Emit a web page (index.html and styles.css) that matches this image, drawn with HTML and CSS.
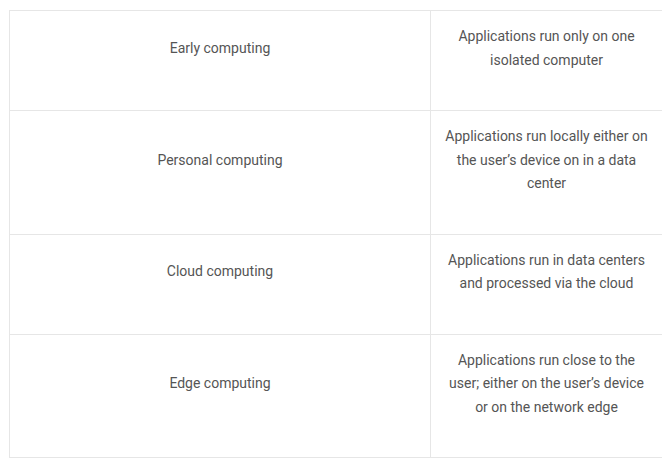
FILE: index.html
```html
<!DOCTYPE html>
<html>
<head>
<meta charset="utf-8">
<link rel="stylesheet" href="styles.css">
</head>
<body>
<table class="cmp">
  <colgroup><col class="c1"><col class="c2"></colgroup>
  <tbody>
    <tr><td><p>Early computing</p></td><td><p>Applications run only on one isolated computer</p></td></tr>
    <tr><td><p>Personal computing</p></td><td><p>Applications run locally either on the user’s device on in a data center</p></td></tr>
    <tr><td><p>Cloud computing</p></td><td><p>Applications run in data centers and processed via the cloud</p></td></tr>
    <tr><td><p>Edge computing</p></td><td><p>Applications run close to the user; either on the user’s device or on the network edge</p></td></tr>
  </tbody>
</table>
</body>
</html>
```
FILE: styles.css
```css
html, body { background: #fff; }
body {
  margin: 10px 9px 0 9px;
  font-family: Roboto, "Liberation Sans", sans-serif;
  font-size: 14px;
  color: #555;
}
.cmp {
  width: 654px;
  border-collapse: collapse;
  table-layout: fixed;
}
.c1 { width: 421px; }
.cmp td {
  border: 1px solid #e6e6e6;
  padding: 14px 12px;
  text-align: center;
  vertical-align: middle;
  line-height: 23.5px;
}
.cmp p { margin: 0 0 24px; }
```
